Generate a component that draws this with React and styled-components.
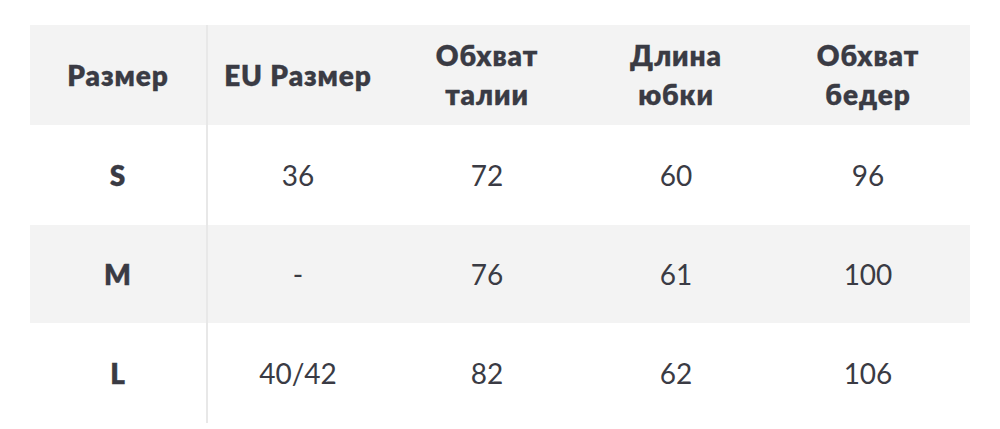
import React from "react";
import styled, { createGlobalStyle } from "styled-components";

const Global = createGlobalStyle`
  html, body { margin: 0; padding: 0; background: #ffffff; }
  body { font-family: "Lato", "Open Sans", "Noto Sans", sans-serif; }
`;

const Page = styled.div`
  padding: 25px 30px 6px 30px;
`;

const Table = styled.div`
  display: grid;
  grid-template-columns: 178px 180px 198px 180px 204px;
  width: 940px;
  color: #3a3b44;
`;

const Row = styled.div`
  display: contents;
`;

const Cell = styled.div`
  height: ${(p) => p.$h}px;
  display: flex;
  align-items: center;
  justify-content: center;
  text-align: center;
  background: ${(p) => (p.$shade ? "#f3f3f3" : "#ffffff")};
  font-size: 28px;
  line-height: 39px;
  font-weight: ${(p) => (p.$bold ? 800 : 400)};
  letter-spacing: ${(p) => (p.$bold ? "0.9px" : "0")};
  -webkit-text-stroke: ${(p) => (p.$bold ? "0.3px #3a3b44" : "0")};
  border-right: ${(p) => (p.$divider ? "2px solid #e8e8e8" : "none")};
  box-sizing: border-box;
`;

const header = ["Размер", "EU Размер", ["Обхват", "талии"], ["Длина", "юбки"], ["Обхват", "бедер"]];

const rows = [
  { cells: ["S", "36", "72", "60", "96"], h: 100 },
  { cells: ["M", "-", "76", "61", "100"], h: 98 },
  { cells: ["L", "40/42", "82", "62", "106"], h: 100 },
];

export default function App() {
  return (
    <Page>
      <Global />
      <Table>
        <Row>
          {header.map((h, i) => (
            <Cell key={i} $h={100} $shade $bold $divider={i === 0}>
              {Array.isArray(h) ? (
                <span>
                  {h[0]}
                  <br />
                  {h[1]}
                </span>
              ) : (
                h
              )}
            </Cell>
          ))}
        </Row>
        {rows.map((r, ri) => (
          <Row key={ri}>
            {r.cells.map((c, ci) => (
              <Cell key={ci} $h={r.h} $shade={ri === 1} $bold={ci === 0} $divider={ci === 0}>
                {c}
              </Cell>
            ))}
          </Row>
        ))}
      </Table>
    </Page>
  );
}
